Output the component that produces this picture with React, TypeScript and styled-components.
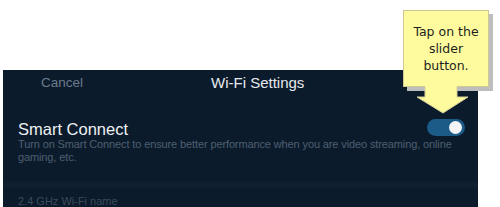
import styled, { createGlobalStyle } from 'styled-components'

const GlobalStyle = createGlobalStyle`
    html, body {
        margin: 0;
        padding: 0;
        background: #ffffff;
    }
    body {
        font-family: "Liberation Sans", Arial, sans-serif;
    }
`

export default function App() {
    return (
        <Page>
            <GlobalStyle />
            <Screen>
                <Header>
                    <Cancel>Cancel</Cancel>
                    <Title>Wi-Fi Settings</Title>
                </Header>
                <SettingRow>
                    <SettingName>Smart Connect</SettingName>
                    <Toggle $on>
                        <Knob />
                    </Toggle>
                    <SettingHelp>
                        Turn on Smart Connect to ensure better performance when you are video streaming, online gaming, etc.
                    </SettingHelp>
                </SettingRow>
                <SectionGap />
                <FieldLabel>2.4 GHz Wi-Fi name</FieldLabel>
            </Screen>

            <Callout>
                <CalloutBox>
                    Tap on the
                    <br />
                    slider
                    <br />
                    button.
                </CalloutBox>
                <CalloutArrow width="54" height="28" viewBox="0 0 54 28">
                    <polygon points="8,0 40,0 40,11 51,11 26,27 0,11 8,11" fill="#fdfb9e" />
                    <polyline points="40,1 40,11 51,11 26,27 0,11 8,11 8,1" fill="none" stroke="#d6d19a" strokeWidth="1" />
                </CalloutArrow>
            </Callout>
        </Page>
    )
}

const Page = styled.div`
    position: relative;
    width: 500px;
    height: 207px;
    padding: 70px 0 0 3px;
    box-sizing: border-box;
    overflow: hidden;
`

const Screen = styled.div`
    width: 475px;
    height: 137px;
    background: #0c1b2b;
    padding: 0 15px;
    box-sizing: border-box;
    display: flex;
    flex-direction: column;
`

const Header = styled.div`
    height: 24px;
    display: grid;
    grid-template-columns: 193px auto;
    align-items: center;
`

const Cancel = styled.span`
    padding-left: 23px;
    font-size: 13.5px;
    color: #6a7c8e;
`

const Title = styled.span`
    font-size: 15px;
    color: #e6eaee;
`

const SettingRow = styled.div`
    margin-top: 27px;
    display: grid;
    grid-template-columns: 1fr auto;
    grid-template-rows: 16px auto;
    align-items: start;
`

const SettingName = styled.div`
    font-size: 16.5px;
    line-height: 16px;
    color: #eef1f4;
`

const SettingHelp = styled.div`
    grid-column: 1 / -1;
    width: 436px;
    margin-top: 1px;
    font-size: 11px;
    letter-spacing: -0.12px;
    line-height: 13px;
    color: #4d5f72;
`

const Toggle = styled.div<{ $on?: boolean }>`
    margin-top: -2px;
    margin-right: -2px;
    width: 38px;
    height: 17px;
    border-radius: 9px;
    background: ${p => (p.$on ? '#1c5a88' : '#3a4856')};
    display: flex;
    align-items: center;
    justify-content: ${p => (p.$on ? 'flex-end' : 'flex-start')};
    padding: 0 3px;
    box-sizing: border-box;
`

const Knob = styled.div`
    width: 13px;
    height: 13px;
    border-radius: 50%;
    background: #f2f4f6;
`

const SectionGap = styled.div`
    margin-top: 16px;
    height: 10px;
    margin-left: -15px;
    margin-right: -15px;
    background: linear-gradient(to bottom, #0c1b2b, #0f2131 50%, #0c1b2b);
`

const FieldLabel = styled.div`
    margin-top: 5px;
    font-size: 11px;
    color: #3a4b5d;
`

const Callout = styled.div`
    position: absolute;
    left: 403px;
    top: 10px;
    width: 86px;
`

const CalloutBox = styled.div`
    height: 77px;
    box-sizing: border-box;
    background: #fdfb9e;
    border: 1px solid #cfc991;
    box-shadow: 4px 4px 0 #bdbdbd;
    display: flex;
    align-items: center;
    justify-content: center;
    text-align: center;
    font-family: "DejaVu Sans", Verdana, sans-serif;
    font-size: 12.5px;
    line-height: 17px;
    color: #1e1e1e;
`

const CalloutArrow = styled.svg`
    position: absolute;
    left: 14px;
    top: 76px;
`
